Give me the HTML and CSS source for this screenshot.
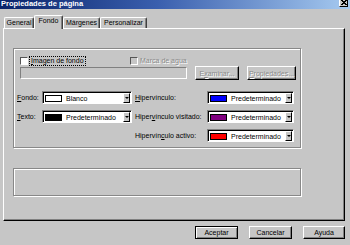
FILE: index.html
```html
<!DOCTYPE html>
<html lang="es">

<head>
    <meta charset="UTF-8">
    <meta name="viewport" content="width=device-width, initial-scale=1.0">
    <title>Propiedades de página</title>
    <link rel="stylesheet" href="styles.css">
</head>

<body>
    <div class="window">
        <!-- Barra de título -->
        <div class="titlebar">
            <span class="title">Propiedades de página</span>
            <span class="close">
                <svg width="7" height="6" viewBox="0 0 7 6">
                    <path d="M1 0 L6 5 M6 0 L1 5 M2 0 L7 5 M7 0 L2 5" stroke="#000" stroke-width="1" fill="none"/>
                </svg>
            </span>
        </div>

        <!-- Pestañas -->
        <div class="tabs">
            <div class="tab tab-general">General</div>
            <div class="tab tab-fondo active">Fondo</div>
            <div class="tab tab-margenes">Márgenes</div>
            <div class="tab tab-personalizar">Personalizar</div>
        </div>

        <div class="panel">
            <div class="group group-imagen">
                <div class="check-row">
                    <label class="check check-imagen"><span class="box"></span><span class="focus"><u>I</u>magen de fondo</span></label>
                    <label class="check disabled"><span class="box"></span><span class="dim">Marca de agua</span></label>
                </div>

                <div class="file-row">
                    <div class="textbox"></div>
                    <button class="btn btn-examinar disabled">E<u>x</u>aminar...</button>
                    <button class="btn btn-propiedades disabled"><u>P</u>ropiedades...</button>
                </div>

                <!-- Colores -->
                <div class="colors">
                    <span class="label"><u>F</u>ondo:</span>
                    <div class="select left"><span class="swatch white"></span><span class="value">Blanco</span><span class="arrow"></span></div>
                    <span class="label label-right"><u>H</u>ipervínculo:</span>
                    <div class="select"><span class="swatch blue"></span><span class="value">Predeterminado</span><span class="arrow"></span></div>

                    <span class="label"><u>T</u>exto:</span>
                    <div class="select left"><span class="swatch black"></span><span class="value">Predeterminado</span><span class="arrow"></span></div>
                    <span class="label label-right">Hiper<u>v</u>ínculo visitado:</span>
                    <div class="select"><span class="swatch purple"></span><span class="value">Predeterminado</span><span class="arrow"></span></div>

                    <span class="label"></span>
                    <span></span>
                    <span class="label label-right">Hipervín<u>c</u>ulo activo:</span>
                    <div class="select"><span class="swatch red"></span><span class="value">Predeterminado</span><span class="arrow"></span></div>
                </div>
            </div>

            <div class="group group-vacio"></div>
        </div>

        <!-- Botones inferiores -->
        <div class="actions">
            <button class="btn default">Aceptar</button>
            <button class="btn">Cancelar</button>
            <button class="btn btn-ayuda">Ayuda</button>
        </div>
    </div>
</body>

</html>
```

FILE: styles.css
```css
body {
    margin: 0;
    background-color: #c6c6c6;
    font-family: "Liberation Sans", Arial, sans-serif;
    font-size: 7px;
    color: #000;
}

.window {
    width: 350px;
    height: 245px;
    display: flex;
    flex-direction: column;
    overflow: hidden;
}

/* Barra de título */
.titlebar {
    height: 9px;
    display: flex;
    justify-content: space-between;
    align-items: flex-start;
    background: linear-gradient(to right, #0a246a 0%, #3a5fae 45%, #a6caf0 100%);
    padding: 0 2px 0 1px;
}

.title {
    color: #fff;
    font-weight: bold;
    font-size: 7.5px;
    line-height: 8px;
}

.close {
    width: 9px;
    height: 8px;
    margin-top: -1px;
    box-sizing: border-box;
    background-color: #c6c6c6;
    border: 1px solid;
    border-color: #fff #000 #000 #fff;
    display: flex;
    align-items: center;
    justify-content: center;
}

/* Pestañas */
.tabs {
    height: 13px;
    margin-top: 6px;
    padding-left: 4px;
    display: flex;
    align-items: flex-end;
}

.tab {
    height: 11px;
    box-sizing: border-box;
    border: 1px solid;
    border-color: #fff #404040 transparent #fff;
    border-bottom: none;
    border-radius: 2px 2px 0 0;
    box-shadow: inset -1px 0 #808080;
    line-height: 10px;
    text-align: center;
}

.tab-general { width: 30px; }
.tab-fondo { width: 29px; }
.tab-margenes { width: 37px; }
.tab-personalizar { width: 47px; }

.tab.active {
    height: 14px;
    margin-bottom: -1px;
    line-height: 10px;
    background-color: #c6c6c6;
    position: relative;
    z-index: 1;
}

/* Panel de la pestaña */
.panel {
    width: 342px;
    height: 193px;
    margin-left: 3px;
    box-sizing: border-box;
    border: 1px solid;
    border-color: #fff #000 #000 #fff;
    box-shadow: inset -1px -1px #808080;
    padding: 19px 0 0 9px;
}

.group {
    width: 288px;
    box-sizing: border-box;
    border: 1px solid #888;
    box-shadow: inset 1px 1px #fff, 1px 1px #fff;
}

.group-imagen {
    height: 100px;
    padding: 7px 0 0 3px;
}

.group-vacio {
    height: 28px;
    margin-top: 20px;
}

/* Casillas */
.check-row {
    height: 9px;
    margin-left: 3px;
    display: flex;
    align-items: center;
}

.check {
    display: flex;
    align-items: center;
}

.check-imagen {
    width: 110px;
}

.box {
    width: 8px;
    height: 8px;
    box-sizing: border-box;
    background-color: #fff;
    border: 1px solid;
    border-color: #555 #fff #fff #555;
    margin-right: 2px;
}

.check.disabled .box {
    background-color: #c6c6c6;
}

.focus {
    outline: 1px dotted #000;
    line-height: 8px;
    padding: 0 1px;
}

.dim,
.btn.disabled {
    color: #8a8a8a;
    text-shadow: 1px 1px #fff;
}

/* Fila de archivo */
.file-row {
    height: 14px;
    margin: 1px 0 0 3px;
    display: flex;
    align-items: center;
}

.textbox {
    width: 167px;
    height: 12px;
    box-sizing: border-box;
    border: 1px solid;
    border-color: #808080 #fff #fff #808080;
}

.btn {
    height: 14px;
    box-sizing: border-box;
    padding: 0;
    font-family: inherit;
    font-size: 7px;
    color: #000;
    background-color: #c6c6c6;
    border: 1px solid;
    border-color: #fff #000 #000 #fff;
    box-shadow: inset -1px -1px #808080;
}

.btn-examinar {
    width: 44px;
    margin-left: 8px;
}

.btn-propiedades {
    width: 49px;
    margin-left: 8px;
}

/* Colores */
.colors {
    margin-top: 11px;
    display: grid;
    grid-template-columns: 25px 90px 75px 87px;
    grid-template-rows: 13px 13px 13px;
    row-gap: 6px;
    align-items: center;
}

.label-right {
    padding-left: 3px;
}

.select {
    height: 13px;
    box-sizing: border-box;
    background-color: #fff;
    border: 1px solid;
    border-color: #808080 #fff #fff #808080;
    box-shadow: inset 1px 1px #000;
    display: flex;
    align-items: center;
    padding: 1px 1px 0 2px;
}

.swatch {
    width: 17px;
    height: 7px;
    box-sizing: border-box;
    border: 1px solid #000;
}

.white { background-color: #fff; }
.black { background-color: #000; }
.blue { background-color: #0000ff; }
.purple { background-color: #800080; }
.red { background-color: #ff0000; }

.value {
    flex: 1;
    margin-left: 4px;
}

.select.left .value {
    margin-left: 4px;
}

.arrow {
    width: 7px;
    height: 10px;
    box-sizing: border-box;
    background-color: #c6c6c6;
    border: 1px solid;
    border-color: #fff #000 #000 #fff;
    display: flex;
    align-items: center;
    justify-content: center;
}

.arrow::after {
    content: "";
    border-left: 2px solid transparent;
    border-right: 2px solid transparent;
    border-top: 2px solid #000;
}

/* Botones inferiores */
.actions {
    margin-top: 5px;
    padding-right: 5px;
    display: flex;
    justify-content: flex-end;
    gap: 11px;
}

.actions .btn {
    width: 43px;
    height: 13px;
}

.actions .btn-ayuda {
    width: 42px;
}

.btn.default {
    border-color: #000;
    box-shadow: inset 1px 1px #fff, inset -1px -1px #808080;
}
```
